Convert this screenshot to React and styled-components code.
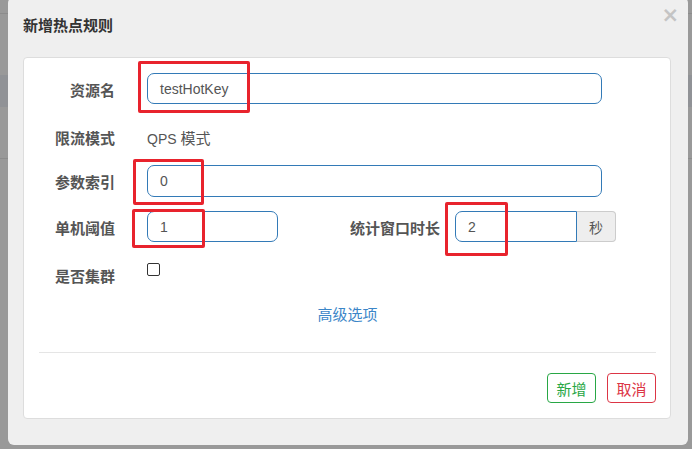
import React from 'react'
import styled, { createGlobalStyle } from 'styled-components'

const GlobalStyle = createGlobalStyle`
    html, body {
        margin : 0;
        padding : 0;
        width : 692px;
        height : 449px;
        overflow : hidden;
        font-family : "Liberation Sans", "Noto Sans CJK SC", sans-serif;
        font-size : 14px;
        color : #555;
    }
`;

// the dimmed page behind the modal
const Backdrop = styled.div`
    width : 692px;
    height : 449px;
    background-color : #999;
    display : flex;
    flex-direction : column;
    position : relative;
`;

const PageLine = styled.div`
    margin-top : ${p => p.top}px;
    height : ${p => p.h || 1}px;
    background-color : ${p => p.color || '#8c8c8c'};
`;

const Dialog = styled.div`
    position : absolute;
    left : 8px;
    top : -3px;
    width : 680px;
    height : 448px;
    box-sizing : border-box;
    background-color : #efefef;
    border-radius : 6px;
    padding : 0 17px 0 15px;
    display : flex;
    flex-direction : column;
`;

const Header = styled.div`
    height : 60px;
    display : flex;
    align-items : flex-start;
    justify-content : space-between;
`;

const Title = styled.h4`
    margin : 19px 0 0 0;
    font-size : 15px;
    line-height : 20px;
    font-weight : bold;
    color : #333;
`;

const Close = styled.span`
    margin : 8px -8px 0 0;
    font-size : 21px;
    font-weight : bold;
    line-height : 21px;
    color : #c4c4c4;
    font-family : "DejaVu Sans", sans-serif;
`;

const Card = styled.div`
    background-color : #fff;
    border : 1px solid #ddd;
    border-radius : 4px;
    padding : 15px 14px 15px 15px;
    display : flex;
    flex-direction : column;
`;

const Row = styled.div`
    display : flex;
    align-items : flex-start;
    height : 31px;
    & + & {
        margin-top : 15px;
    }
`;

const Label = styled.label`
    width : ${p => p.w || 76}px;
    margin-right : ${p => p.gap || 32}px;
    text-align : right;
    font-size : 15px;
    font-weight : bold;
    color : #555;
    line-height : 20px;
    padding-top : ${p => p.pt || 8}px;
    white-space : nowrap;
    flex-shrink : 0;
`;

const Static = styled.span`
    line-height : 20px;
    padding-top : 10px;
    color : #555;
`;

const Han = styled.span`
    font-size : 15px;
`;

const Field = styled.div`
    position : relative;
    width : ${p => p.w}px;
    height : ${p => p.h || 31}px;
`;

const Input = styled.div`
    box-sizing : border-box;
    height : 100%;
    border : 1px solid #337ab7;
    border-radius : ${p => p.group ? '7px 0 0 7px' : '7px'};
    padding : 0 12px;
    display : flex;
    align-items : center;
    color : #555;
    font-size : 14px;
`;

const Group = styled.div`
    display : flex;
    height : 31px;
`;

const Addon = styled.span`
    box-sizing : border-box;
    width : 39px;
    height : 31px;
    background-color : #eee;
    border : 1px solid #ccc;
    border-left : none;
    border-radius : 0 4px 4px 0;
    display : flex;
    align-items : center;
    justify-content : center;
    color : #555;
`;

// red annotation frame drawn over a field
const Mark = styled.span`
    position : absolute;
    left : ${p => p.x}px;
    top : ${p => p.y}px;
    width : ${p => p.w}px;
    height : ${p => p.h}px;
    box-sizing : border-box;
    border : 3px solid #e8232d;
    border-radius : 2px;
    pointer-events : none;
`;

const Check = styled.span`
    margin-top : 6px;
    width : 13px;
    height : 13px;
    box-sizing : border-box;
    border : 1px solid #333;
    border-radius : 2px;
    background-color : #fff;
`;

const Advanced = styled.a`
    margin-top : 17px;
    text-align : center;
    line-height : 20px;
    font-size : 15px;
    color : #3c86c8;
    cursor : pointer;
`;

const Divider = styled.hr`
    margin : 27px 0 0 0;
    border : none;
    border-top : 1px solid #e5e5e5;
`;

const Footer = styled.div`
    margin-top : 20px;
    display : flex;
    justify-content : flex-end;
    gap : 11px;
`;

const Button = styled.button`
    width : 49px;
    height : 30px;
    padding : 0;
    background-color : #fff;
    border : 1px solid ${p => p.color};
    border-radius : 4px;
    color : ${p => p.color};
    font-family : inherit;
    font-size : 15px;
`;

const App = () => {
    return (
        <>
            <GlobalStyle />
            <Backdrop>
                <PageLine top={13} />
                <PageLine top={61} h={32} color="#909296" />
                <PageLine top={51} />
                <Dialog>
                    <Header>
                        <Title>新增热点规则</Title>
                        <Close>×</Close>
                    </Header>
                    <Card>
                        <Row>
                            <Label>资源名</Label>
                            <Field w={455}>
                                <Input>testHotKey</Input>
                                <Mark x={-9} y={-12} w={112} h={52} />
                            </Field>
                        </Row>
                        <Row>
                            <Label pt={10}>限流模式</Label>
                            <Static>QPS <Han>模式</Han></Static>
                        </Row>
                        <Row>
                            <Label>参数索引</Label>
                            <Field w={455} h={32}>
                                <Input>0</Input>
                                <Mark x={-14} y={-6} w={71} h={46} />
                            </Field>
                        </Row>
                        <Row>
                            <Label>单机阈值</Label>
                            <Field w={131}>
                                <Input>1</Input>
                                <Mark x={-15} y={-2} w={73} h={39} />
                            </Field>
                            <Label w={162} gap={15}>统计窗口时长</Label>
                            <Group>
                                <Field w={122}>
                                    <Input group>2</Input>
                                    <Mark x={-10} y={-9} w={63} h={54} />
                                </Field>
                                <Addon>秒</Addon>
                            </Group>
                        </Row>
                        <Row>
                            <Label pt={10}>是否集群</Label>
                            <Check />
                        </Row>
                        <Advanced>高级选项</Advanced>
                        <Divider />
                        <Footer>
                            <Button color="#28a745">新增</Button>
                            <Button color="#dc3545">取消</Button>
                        </Footer>
                    </Card>
                </Dialog>
            </Backdrop>
        </>
    )
};

export default App;
